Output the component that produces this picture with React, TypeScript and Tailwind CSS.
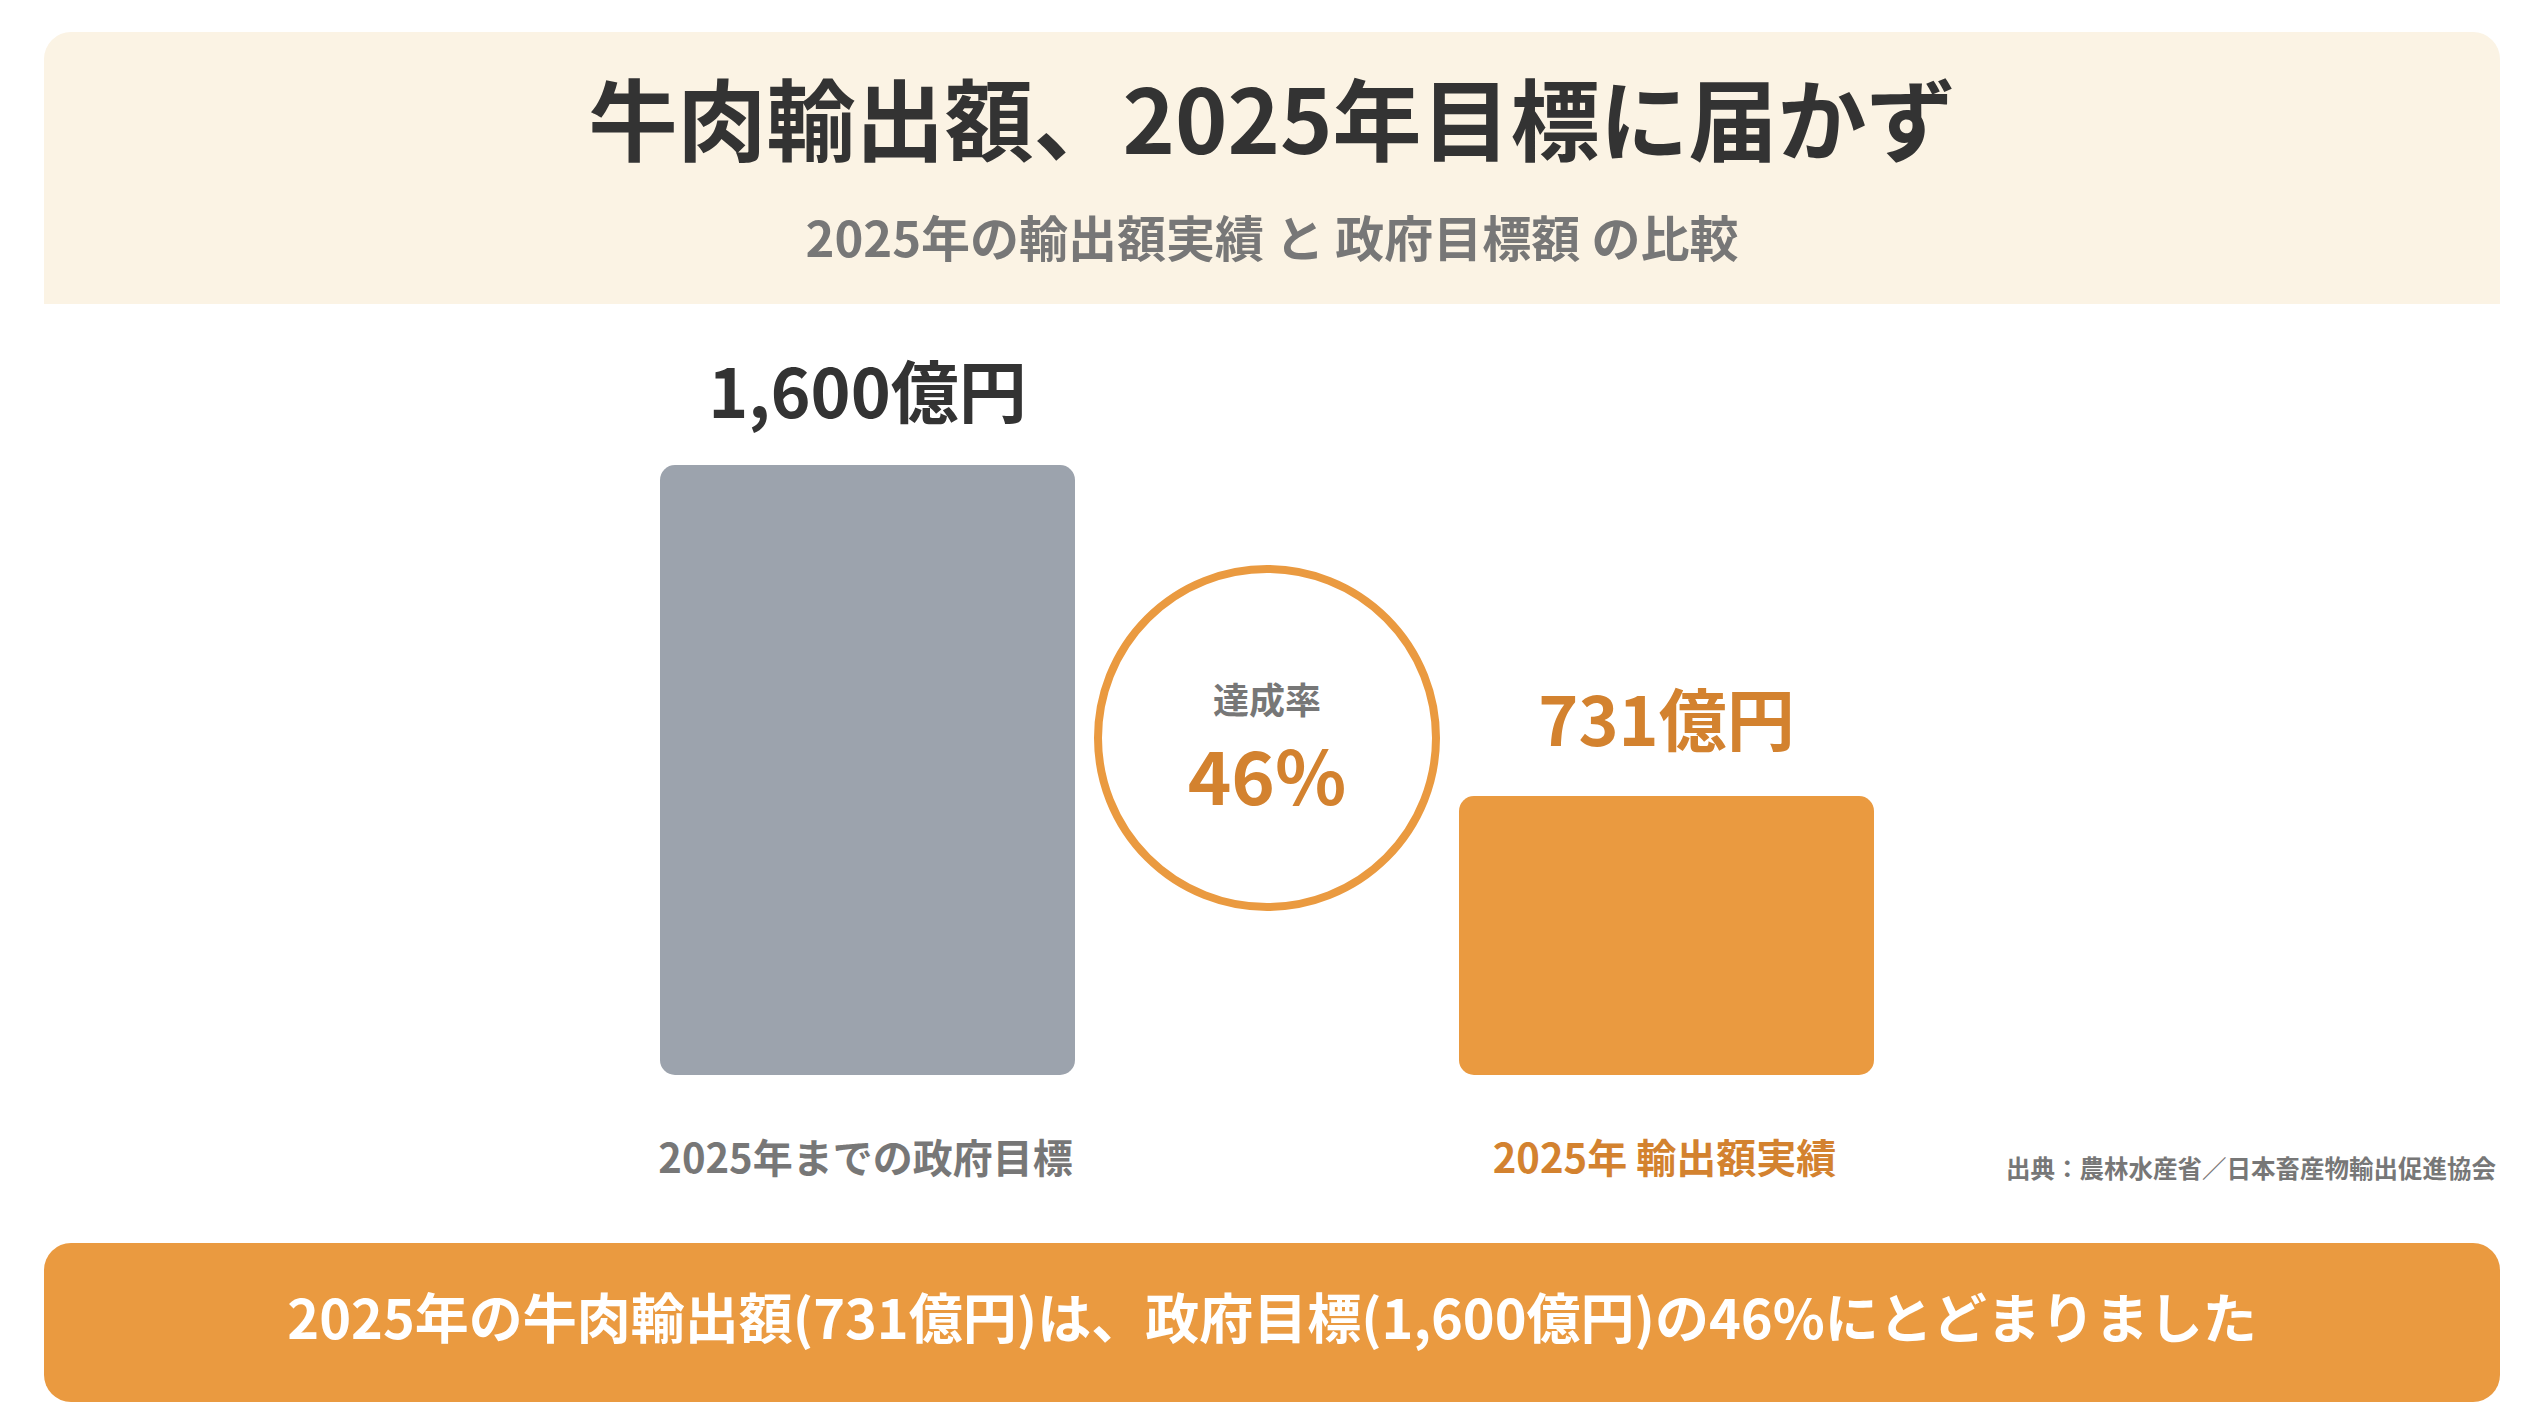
import React from "react";

const font = { fontFamily: '"Noto Sans CJK JP", "Noto Sans", sans-serif' };

export default function App() {
  return (
    <main
      className="w-[2544px] h-[1422px] bg-white px-[44px] pt-[32px] flex flex-col font-bold"
      style={font}
    >
      {/* Header */}
      <div className="bg-[#fbf3e4] rounded-t-[27px] h-[272px] flex flex-col items-center pt-[30px]">
        <h1 className="text-[89px] leading-[108px] text-[#333333]">
          牛肉輸出額、2025年目標に届かず
        </h1>
        <p className="mt-[35px] text-[49px] leading-[62px] text-[#777777]">
          2025年の輸出額実績 と 政府目標額 の比較
        </p>
      </div>

      {/* Chart */}
      <div className="mt-[50px] pr-[10px] flex justify-center items-end gap-[19px]">
        <div className="w-[415px] flex flex-col items-center">
          <span className="text-[68px] leading-[70px] text-[#333333] mb-[41px]">1,600億円</span>
          <div className="w-full h-[610px] bg-[#9ca3ad] rounded-[15px]" />
        </div>
        <div className="w-[346px] h-[346px] mb-[164px] rounded-full border-[8px] border-[#ea9a40] flex flex-col items-center justify-center pt-[10px]">
          <span className="text-[36px] leading-[44px] text-[#777777]">達成率</span>
          <span className="mt-[16px] text-[74px] leading-[74px] text-[#d3822f]">46%</span>
        </div>
        <div className="w-[415px] flex flex-col items-center">
          <span className="text-[68px] leading-[70px] text-[#d3822f] mb-[44px]">731億円</span>
          <div className="w-full h-[279px] bg-[#ea9a40] rounded-[15px]" />
        </div>
      </div>

      {/* Labels + source */}
      <div className="mt-[51px] flex items-end">
        <div className="flex-1" />
        <div className="flex gap-[19px] pr-[10px]">
          <div className="w-[415px] text-center text-[40px] leading-[60px] text-[#777777] whitespace-nowrap">
            2025年までの政府目標
          </div>
          <div className="w-[346px]" />
          <div className="w-[415px] text-center text-[40px] leading-[60px] text-[#d3822f] whitespace-nowrap">
            2025年 輸出額実績
          </div>
        </div>
        <div className="flex-1 flex justify-end pr-[4px]">
          <span className="text-[24.5px] leading-[36px] text-[#777777] whitespace-nowrap">
            出典：農林水産省／日本畜産物輸出促進協会
          </span>
        </div>
      </div>

      {/* Banner */}
      <div className="mt-[57px] h-[159px] bg-[#ea9a40] rounded-[27px] flex items-center justify-center pb-[14px]">
        <p className="text-[54px] leading-[70px] text-white">
          2025年の牛肉輸出額(731億円)は、政府目標(1,600億円)の46%にとどまりました
        </p>
      </div>
    </main>
  );
}
